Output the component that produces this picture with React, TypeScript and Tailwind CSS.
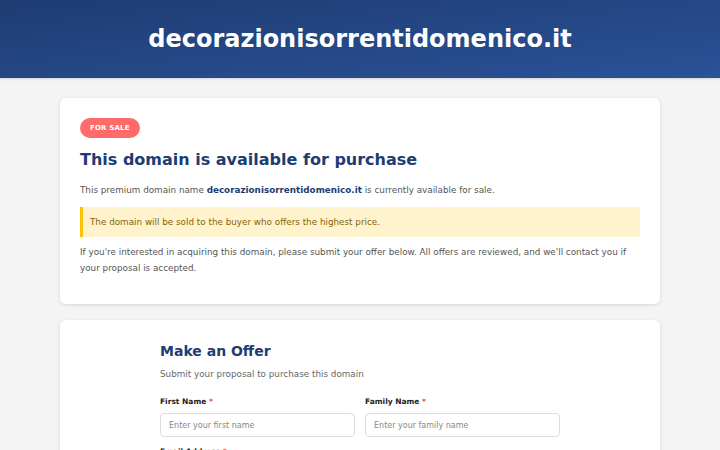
export default function App() {
    return (
        <div className="min-h-screen bg-[#f4f4f4] font-['DejaVu_Sans',sans-serif]">
            <header className="h-[78px] flex items-center justify-center bg-gradient-to-br from-[#1e3c72] to-[#2a5298] shadow-sm">
                <h1 className="text-[24px] font-bold text-white">decorazionisorrentidomenico.it</h1>
            </header>

            <main className="w-[600px] mx-auto pt-5 flex flex-col gap-4">
                {/* Domain info */}
                <section className="bg-white rounded-md shadow-[0_1px_4px_rgba(0,0,0,0.12)] px-5 pt-5 pb-7">
                    <div className="w-fit h-[20px] flex items-center bg-[#ff6b6b] text-white text-[7px] font-bold uppercase tracking-wide rounded-full px-[10px]">
                        For Sale
                    </div>
                    <h2 className="mt-[11px] text-[16px] leading-[22px] font-bold text-[#1e3c72]">This domain is available for purchase</h2>
                    <p className="mt-[12px] text-[8.8px] leading-[14px] text-[#555]">
                        This premium domain name <strong className="text-[#1e3c72]">decorazionisorrentidomenico.it</strong> is currently available for sale.
                    </p>
                    <div className="mt-[10px] bg-[#fff3cd] border-l-[3px] border-[#ffc107] pl-[7px] pr-[10px] py-[8px] text-[8.8px] text-[#856404] leading-[14px]">
                        The domain will be sold to the buyer who offers the highest price.
                    </div>
                    <p className="mt-[7px] text-[8.8px] leading-[16px] text-[#555]">
                        If you're interested in acquiring this domain, please submit your offer below. All offers are reviewed, and we'll contact you if your proposal is accepted.
                    </p>
                </section>

                {/* Offer form */}
                <section className="bg-white rounded-md shadow-[0_1px_4px_rgba(0,0,0,0.12)] pt-[21px] pb-6">
                    <div className="w-[400px] mx-auto">
                        <h2 className="text-[14px] leading-[20px] font-bold text-[#1e3c72]">Make an Offer</h2>
                        <p className="mt-[6px] text-[8.8px] leading-[14px] text-[#666]">Submit your proposal to purchase this domain</p>
                        <div className="mt-[16px] grid grid-cols-2 gap-[10px]">
                            <div>
                                <label className="block text-[7.5px] leading-[10px] font-bold text-[#222] mb-[6px]">
                                    First Name <span className="text-[#e74c3c]">*</span>
                                </label>
                                <input
                                    type="text"
                                    placeholder="Enter your first name"
                                    className="block w-full h-[24px] border border-[#ddd] rounded px-[8px] text-[8px] placeholder:text-[#888] outline-none"
                                />
                            </div>
                            <div>
                                <label className="block text-[7.5px] leading-[10px] font-bold text-[#222] mb-[6px]">
                                    Family Name <span className="text-[#e74c3c]">*</span>
                                </label>
                                <input
                                    type="text"
                                    placeholder="Enter your family name"
                                    className="block w-full h-[24px] border border-[#ddd] rounded px-[8px] text-[8px] placeholder:text-[#888] outline-none"
                                />
                            </div>
                        </div>
                        <div className="mt-[10px]">
                            <label className="block text-[7.5px] leading-[10px] font-bold text-[#222] mb-[6px]">
                                Email Address <span className="text-[#e74c3c]">*</span>
                            </label>
                            <input
                                type="email"
                                placeholder="Enter your email address"
                                className="block w-full h-[24px] border border-[#ddd] rounded px-[8px] text-[8px] placeholder:text-[#888] outline-none"
                            />
                        </div>
                    </div>
                </section>
            </main>
        </div>
    );
}
